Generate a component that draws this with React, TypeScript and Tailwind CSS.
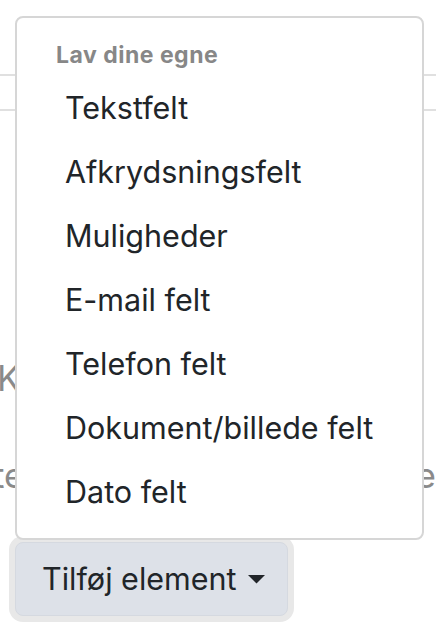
import React from "react";

const items = [
  "Tekstfelt",
  "Afkrydsningsfelt",
  "Muligheder",
  "E-mail felt",
  "Telefon felt",
  "Dokument/billede felt",
  "Dato felt",
];

export default function App() {
  return (
    <div
      className="relative w-[436px] h-[636px] overflow-hidden bg-white"
      style={{ fontFamily: "Inter, 'Noto Sans', sans-serif" }}
    >
      {/* underlying page */}
      <div className="flex flex-col">
        <div className="mt-[74px] h-[2px] bg-[#e0e0e0]" />
        <div className="mt-[33px] h-[2px] bg-[#e0e0e0]" />
        <div className="mt-[246px] ml-[-3px] text-[35px] leading-[42px] text-[#8a8a8a] whitespace-nowrap">
          Kategorier
        </div>
        <div className="mt-[55px] flex justify-between text-[35px] leading-[42px] text-[#8a8a8a] whitespace-nowrap">
          <span className="ml-[-7px]">te</span>
          <span>de</span>
        </div>
        <div className="mt-[46px] ml-[15px] flex">
          <button className="flex items-center h-[74px] w-[273px] pl-[26px] rounded-[8px] bg-[#dde1e8] border border-[#d5d9e0] shadow-[0_0_0_6px_#e8e8e8] text-[30.5px] leading-[48px] text-[#212529]">
            <span>Tilføj element</span>
            <svg className="ml-[11px] mt-[1px]" width="17" height="9" viewBox="0 0 17 9">
              <path d="M0 0 L17 0 L8.5 8.5 Z" fill="#212529" />
            </svg>
          </button>
        </div>
      </div>

      {/* dropdown menu overlay */}
      <div className="absolute left-[15px] top-[16px] w-[409px] h-[524px] bg-white border-2 border-[#d6d6d6] rounded-[8px] flex flex-col">
        <div className="pt-[21px] pb-[4px] pl-[39px] text-[23px] leading-[33px] font-bold tracking-[0.5px] text-[#878787]">
          Lav dine egne
        </div>
        {items.map((t) => (
          <div
            key={t}
            className="h-[64px] py-[8px] pl-[48px] text-[30.5px] leading-[48px] text-[#212529] whitespace-nowrap"
          >
            {t}
          </div>
        ))}
      </div>
    </div>
  );
}
